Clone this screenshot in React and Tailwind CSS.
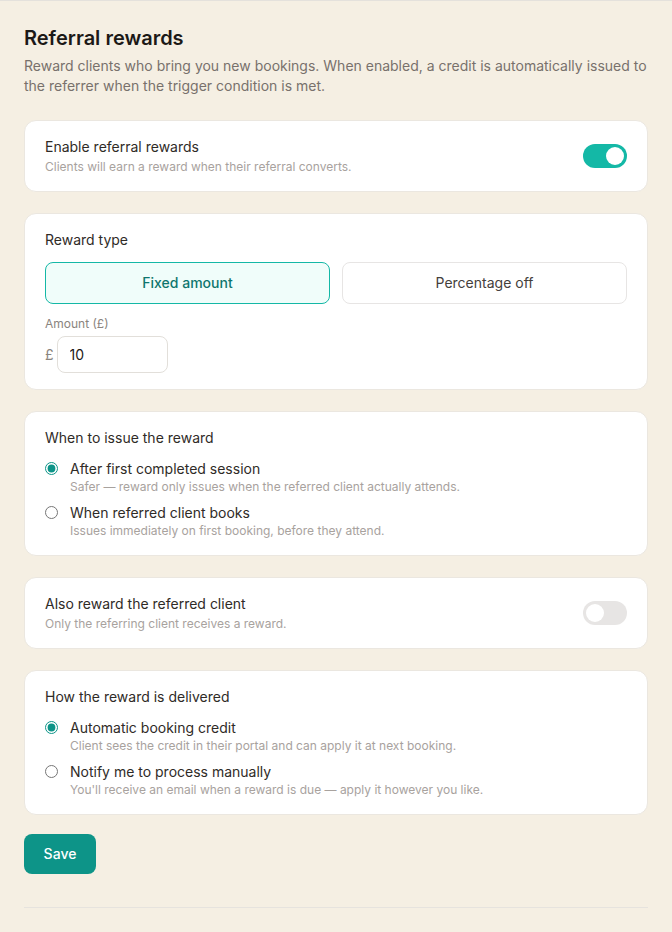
import React, { useState } from 'react';

function Toggle({ on, onChange }) {
  return (
    <button
      type="button"
      onClick={() => onChange(!on)}
      className={`relative inline-flex h-6 w-11 shrink-0 items-center rounded-full transition-colors ${on ? 'bg-[#14b8a6]' : 'bg-[#e7e5e4]'}`}
    >
      <span className={`inline-block h-[18px] w-[18px] rounded-full bg-white transition-transform ${on ? 'translate-x-[23px]' : 'translate-x-[3px]'}`} />
    </button>
  );
}

function Radio({ checked, onSelect, title, hint }) {
  return (
    <label className="flex items-start gap-3 cursor-pointer">
      <input
        type="radio"
        checked={checked}
        onChange={onSelect}
        className="mt-[3px] h-[13px] w-[13px] accent-[#0d9488]"
      />
      <div>
        <div className="text-sm text-[#2f2b27] leading-5">{title}</div>
        <div className="text-xs text-[#a8a29e] leading-4">{hint}</div>
      </div>
    </label>
  );
}

export default function App() {
  const [enabled, setEnabled] = useState(true);
  const [rewardType, setRewardType] = useState('fixed');
  const [amount, setAmount] = useState('10');
  const [trigger, setTrigger] = useState('completed');
  const [rewardReferred, setRewardReferred] = useState(false);
  const [delivery, setDelivery] = useState('credit');

  const card = 'rounded-xl border border-[#ebe7e0] bg-white px-5 py-4';

  return (
    <div className="min-h-screen bg-[#f5efe3] border-t border-[#e4e1dc] font-['Inter','Noto_Sans',sans-serif]">
      <div className="mx-6 pt-[23px] border-b border-[#e6e3de]">
        <h2 className="text-xl font-semibold text-[#1c1917] leading-7">Referral rewards</h2>
        <p className="mt-1 text-sm text-[#78716c] leading-5">
          Reward clients who bring you new bookings. When enabled, a credit is automatically issued to the referrer when the trigger condition is met.
        </p>

        <div className="mt-6 space-y-[21px]">
          <div className={`${card} flex items-center justify-between`}>
            <div>
              <div className="text-sm text-[#2f2b27] leading-5">Enable referral rewards</div>
              <div className="mt-0.5 text-xs text-[#a8a29e] leading-4">Clients will earn a reward when their referral converts.</div>
            </div>
            <Toggle on={enabled} onChange={setEnabled} />
          </div>

          <div className={card}>
            <div className="text-sm text-[#2f2b27] leading-5 mb-3">Reward type</div>
            <div className="grid grid-cols-2 gap-3">
              <button
                type="button"
                onClick={() => setRewardType('fixed')}
                className={`h-[42px] rounded-lg border text-sm ${rewardType === 'fixed' ? 'border-[#14b8a6] bg-[#f0fdfa] text-[#0f766e] font-medium' : 'border-[#e7e5e4] bg-white text-[#44403c]'}`}
              >
                Fixed amount
              </button>
              <button
                type="button"
                onClick={() => setRewardType('percent')}
                className={`h-[42px] rounded-lg border text-sm ${rewardType === 'percent' ? 'border-[#14b8a6] bg-[#f0fdfa] text-[#0f766e] font-medium' : 'border-[#e7e5e4] bg-white text-[#44403c]'}`}
              >
                Percentage off
              </button>
            </div>
            <div className="mt-3 text-xs text-[#8a847e] leading-4">{rewardType === 'fixed' ? 'Amount (£)' : 'Percentage (%)'}</div>
            <div className="mt-1 flex items-center gap-[3px]">
              <span className="text-sm text-[#8a847e]">{rewardType === 'fixed' ? '£' : '%'}</span>
              <input
                value={amount}
                onChange={e => setAmount(e.target.value)}
                className="h-[37px] w-[111px] rounded-lg border border-[#e2dfda] px-3 text-sm text-[#1c1917] outline-none"
              />
            </div>
          </div>

          <div className={card}>
            <div className="text-sm text-[#2f2b27] leading-5 mb-[11px]">When to issue the reward</div>
            <div className="space-y-2">
              <Radio
                checked={trigger === 'completed'}
                onSelect={() => setTrigger('completed')}
                title="After first completed session"
                hint="Safer — reward only issues when the referred client actually attends."
              />
              <Radio
                checked={trigger === 'booked'}
                onSelect={() => setTrigger('booked')}
                title="When referred client books"
                hint="Issues immediately on first booking, before they attend."
              />
            </div>
          </div>

          <div className={`${card} flex items-center justify-between`}>
            <div>
              <div className="text-sm text-[#2f2b27] leading-5">Also reward the referred client</div>
              <div className="mt-0.5 text-xs text-[#a8a29e] leading-4">
                {rewardReferred ? 'Both clients receive a reward.' : 'Only the referring client receives a reward.'}
              </div>
            </div>
            <Toggle on={rewardReferred} onChange={setRewardReferred} />
          </div>

          <div className={card}>
            <div className="text-sm text-[#2f2b27] leading-5 mb-[11px]">How the reward is delivered</div>
            <div className="space-y-2">
              <Radio
                checked={delivery === 'credit'}
                onSelect={() => setDelivery('credit')}
                title="Automatic booking credit"
                hint="Client sees the credit in their portal and can apply it at next booking."
              />
              <Radio
                checked={delivery === 'manual'}
                onSelect={() => setDelivery('manual')}
                title="Notify me to process manually"
                hint="You'll receive an email when a reward is due — apply it however you like."
              />
            </div>
          </div>
        </div>

        <button type="button" className="mt-[19px] h-10 w-[72px] rounded-lg bg-[#0d9488] text-sm font-medium text-white">
          Save
        </button>
        <div className="h-[33px]" />
      </div>
    </div>
  );
}
